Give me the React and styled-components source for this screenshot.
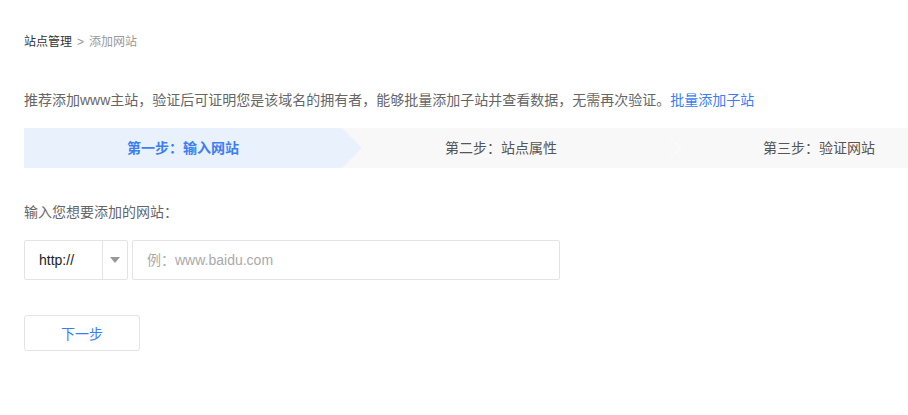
import React from "react";
import styled, { createGlobalStyle } from "styled-components";

const GlobalStyle = createGlobalStyle`
  html, body {
    margin: 0;
    padding: 0;
    background: #fff;
    overflow: hidden;
  }
  body {
    font-family: "Liberation Sans", "Noto Sans CJK SC", Arial, sans-serif;
    color: #333;
  }
  * { box-sizing: border-box; }
`;

const Page = styled.div`
  width: 908px;
  padding: 32px 0 40px 24px;
  overflow: hidden;
`;

const Breadcrumb = styled.div`
  font-size: 12px;
  line-height: 20px;
  color: #333;
`;

const Crumb = styled.span`
  color: ${(p) => (p.$current ? "#999" : "#333")};
`;

const Sep = styled.span`
  color: #999;
  margin: 0 5px;
`;

const Tip = styled.p`
  margin: 38px 0 0;
  font-size: 14px;
  line-height: 20px;
  color: #666;
`;

const Link = styled.a`
  color: #3a7ef5;
  text-decoration: none;
  cursor: pointer;
`;

const Steps = styled.div`
  display: flex;
  margin-top: 18px;
  width: 954px;
  height: 40px;
`;

const Step = styled.div`
  position: relative;
  flex: 0 0 318px;
  height: 40px;
  line-height: 40px;
  text-align: center;
  font-size: 14px;
  background: ${(p) => (p.$active ? "#e9f1fd" : "#f8f8f8")};
  color: ${(p) => (p.$active ? "#3b7ff2" : "#555")};
  font-weight: ${(p) => (p.$active ? 700 : 400)};

  &::before {
    content: "";
    position: absolute;
    top: 0;
    right: -21px;
    border-top: 20px solid transparent;
    border-bottom: 20px solid transparent;
    border-left: 21px solid ${(p) => (p.$active ? "transparent" : "#fff")};
    z-index: 1;
  }

  &::after {
    content: "";
    position: absolute;
    top: 0;
    right: -20px;
    border-top: 20px solid transparent;
    border-bottom: 20px solid transparent;
    border-left: 20px solid ${(p) => (p.$active ? "#e9f1fd" : "#f8f8f8")};
    z-index: 2;
  }
`;

const Label = styled.div`
  margin-top: 34px;
  font-size: 14px;
  line-height: 20px;
  color: #666;
`;

const InputRow = styled.div`
  display: flex;
  gap: 4px;
  margin-top: 18px;
  height: 40px;
`;

const Select = styled.div`
  display: flex;
  width: 104px;
  height: 40px;
  border: 1px solid #e3e3e3;
  border-radius: 2px;
  background: #fff;
`;

const SelectValue = styled.div`
  flex: 1;
  padding-left: 14px;
  line-height: 38px;
  font-size: 14px;
  color: #222;
`;

const SelectArrow = styled.div`
  width: 25px;
  border-left: 1px solid #e3e3e3;
  display: flex;
  align-items: center;
  justify-content: center;

  &::after {
    content: "";
    border-left: 5px solid transparent;
    border-right: 5px solid transparent;
    border-top: 6px solid #999;
  }
`;

const UrlInput = styled.input`
  width: 428px;
  height: 40px;
  border: 1px solid #e3e3e3;
  border-radius: 2px;
  padding: 0 14px;
  font-size: 14px;
  font-family: "Liberation Sans", "Noto Sans CJK SC", Arial, sans-serif;
  color: #333;
  outline: none;

  &::placeholder {
    color: #aaa;
  }
`;

const NextButton = styled.button`
  display: block;
  margin-top: 35px;
  width: 116px;
  height: 36px;
  border: 1px solid #e3e3e3;
  border-radius: 3px;
  background: #fff;
  color: #3a7ef5;
  font-size: 14px;
  font-family: "Liberation Sans", "Noto Sans CJK SC", Arial, sans-serif;
  cursor: pointer;
`;

const steps = ["第一步：输入网站", "第二步：站点属性", "第三步：验证网站"];

export default function App() {
  return (
    <>
      <GlobalStyle />
      <Page>
        <Breadcrumb>
          <Crumb>站点管理</Crumb>
          <Sep>&gt;</Sep>
          <Crumb $current>添加网站</Crumb>
        </Breadcrumb>

        <Tip>
          推荐添加www主站，验证后可证明您是该域名的拥有者，能够批量添加子站并查看数据，无需再次验证。
          <Link>批量添加子站</Link>
        </Tip>

        <Steps>
          {steps.map((s, i) => (
            <Step key={s} $active={i === 0}>
              {s}
            </Step>
          ))}
        </Steps>

        <Label>输入您想要添加的网站：</Label>

        <InputRow>
          <Select>
            <SelectValue>http://</SelectValue>
            <SelectArrow />
          </Select>
          <UrlInput placeholder="例：www.baidu.com" />
        </InputRow>

        <NextButton>下一步</NextButton>
      </Page>
    </>
  );
}
